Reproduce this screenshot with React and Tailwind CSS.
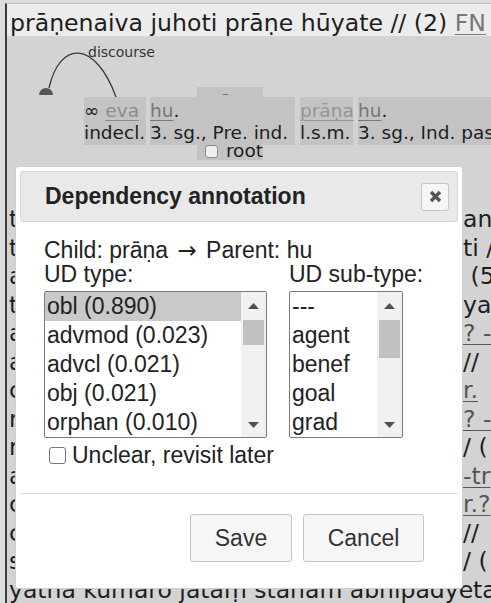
import React from "react";

const skt = "font-['DejaVu_Sans',sans-serif]";
const ui = "font-['Liberation_Sans',Arial,sans-serif]";
const link = "underline decoration-1 underline-offset-[3px]";

// Lines of the reading text that run behind the dialog
const textLines = [
  ["t", "an", false],
  ["t", "ti /", false],
  ["a", " (5", false],
  ["t", "yat", false],
  ["a", "? -", true],
  ["a", "//", false],
  ["c", "r.", true],
  ["r", "? -", true],
  ["r", "/ (", false],
  ["a", "-tr", true],
  ["c", "r.?", true],
  ["c", "//", false],
  ["s", "/ (", false],
];

function UpArrow() {
  return (
    <svg width="11" height="6" viewBox="0 0 11 6">
      <polygon points="0,6 5.5,0 11,6" fill="#505050" />
    </svg>
  );
}

function DownArrow() {
  return (
    <svg width="11" height="6" viewBox="0 0 11 6">
      <polygon points="0,0 11,0 5.5,6" fill="#505050" />
    </svg>
  );
}

function ListBox({ items, thumb, selectedFirst }) {
  return (
    <div className="mt-[5px] h-[147px] w-full border border-[#7a7a7a] rounded-[2px] flex bg-white overflow-hidden">
      <div className="flex-1 flex flex-col">
        {items.map((it, i) => (
          <div
            key={it}
            className={`h-[29px] leading-[29px] pl-[2px] whitespace-nowrap ${i === 0 && selectedFirst ? "bg-[#c9c9c9]" : ""}`}
          >
            {it}
          </div>
        ))}
      </div>
      <div className="w-[25px] bg-[#f1f1f1] flex flex-col">
        <div className="h-[28px] flex items-center justify-center">
          <UpArrow />
        </div>
        <div className={`mx-[2px] bg-[#c1c1c1] ${thumb}`} />
        <div className="flex-1" />
        <div className="h-[25px] flex items-center justify-center">
          <DownArrow />
        </div>
      </div>
    </div>
  );
}

export default function App() {
  return (
    <div className="w-[491px] h-[603px] overflow-hidden relative bg-[#dcdcdc]">
      {/* page column */}
      <div className={`ml-[5px] mt-[3px] h-[600px] border-l-2 border-t border-[#3a3a3a] border-t-[#c2c2c2] bg-[#d3d3d3] flex flex-col text-[#1e1e1e] ${skt}`}>
        {/* verse line */}
        <div className="h-[32px] shrink-0 overflow-hidden bg-[#ececec] pl-[3px] pt-[4px] text-[23.6px] leading-[30px] whitespace-nowrap">
          prāṇenaiva juhoti prāṇe hūyate // (2){" "}
          <span className={`${link} text-[#777]`}>FN</span>
        </div>

        {/* dependency tree canvas */}
        <div className="relative h-[169px] shrink-0">
          <svg className="absolute left-0 top-0" width="140" height="70" viewBox="0 0 140 70">
            <path d="M42 52 C53 4 88 4 109 61" fill="none" stroke="#3a3a3a" strokeWidth="1.3" />
            <path d="M32 59 A7 7 0 0 1 46 59 Z" fill="#555" />
          </svg>
          <span className="absolute left-[81px] top-[9px] text-[14px] leading-[14px] text-[#333]">discourse</span>

          {/* root node */}
          <div className="absolute left-[190px] top-[51px] w-[66px] h-[73px] bg-[#c3c3c3] flex flex-col justify-between">
            <span className="pl-[25px] text-[13px] leading-[13px] text-[#666]">–</span>
            <div className="flex items-center text-[18.5px] leading-[18px]">
              <span className="ml-[8px] mr-[8px] w-[13px] h-[13px] border border-[#8c8c8c] rounded-[3px] bg-[#efefef]" />
              root
            </div>
          </div>

          {/* tokens */}
          <div className="relative z-10 ml-[77px] mt-[61px] flex text-[18.5px] leading-[22px] whitespace-nowrap">
            <div className="w-[62px] shrink-0 bg-[#c3c3c3] pt-[3px] pb-[1px]">
              <div>∞ <span className={`${link} text-[#8c8c8c]`}>eva</span></div>
              <div>indecl.</div>
            </div>
            <div className="w-[145px] shrink-0 ml-[4px] bg-[#c3c3c3] pt-[3px] pb-[1px]">
              <div><span className={`${link} text-[#777]`}>hu</span>.</div>
              <div>3. sg., Pre. ind.</div>
            </div>
            <div className="w-[53px] shrink-0 ml-[5px] bg-[#c3c3c3] pt-[3px] pb-[1px]">
              <div><span className={`${link} text-[#959595]`}>prāṇa</span></div>
              <div>l.s.m.</div>
            </div>
            <div className="w-[160px] shrink-0 ml-[5px] bg-[#c3c3c3] pt-[3px] pb-[1px]">
              <div><span className={`${link} text-[#777]`}>hu</span>.</div>
              <div>3. sg., Ind. pass.</div>
            </div>
          </div>
        </div>

        {/* reading text */}
        <div className="text-[23.5px] leading-[28.5px]">
          {textLines.map(([l, r, isLink], i) => (
            <div key={i} className="flex justify-between">
              <span className="pl-[2px]">{l}</span>
              <span className={`w-[28px] overflow-hidden whitespace-pre ${isLink ? "text-[#555]" : ""}`}>
                {isLink ? <span className={link}>{r}</span> : r}
              </span>
            </div>
          ))}
          <div className="pl-[2px] whitespace-nowrap">yathā kumāro jātaṃ stanam abhipadyeta</div>
        </div>
      </div>

      {/* annotation dialog */}
      <div className={`absolute left-[15px] top-[166px] w-[448px] h-[423px] bg-white border border-[#cfcfcf] rounded-[3px] p-[4px] flex flex-col text-[#222] ${ui}`}>
        <div className="h-[51px] shrink-0 bg-[#e9e9e9] border border-[#d6d6d6] rounded-[3px] flex items-center justify-between pl-[24px] pr-[8px]">
          <span className="text-[23px] font-bold">Dependency annotation</span>
          <div className="w-[28px] h-[28px] border border-[#c5c5c5] bg-[#f6f6f6] rounded-[3px] flex items-center justify-center">
            <svg width="13" height="13" viewBox="0 0 13 13">
              <path d="M2 2 L11 11 M11 2 L2 11" stroke="#555" strokeWidth="3.4" />
            </svg>
          </div>
        </div>

        <div className="flex-1 px-[24px] pt-[16px] text-[23px] leading-[24px]">
          <div className="whitespace-nowrap">
            Child: prāṇa <span className="mx-[3px] font-['DejaVu_Sans',sans-serif] text-[23px]">→</span> Parent: hu
          </div>
          <div className="flex gap-[22px]">
            <div className="w-[223px]">
              <div>UD type:</div>
              <ListBox
                items={["obl (0.890)", "advmod (0.023)", "advcl (0.021)", "obj (0.021)", "orphan (0.010)"]}
                thumb="h-[25px]"
                selectedFirst
              />
            </div>
            <div className="w-[114px]">
              <div className="whitespace-nowrap">UD sub-type:</div>
              <ListBox items={["---", "agent", "benef", "goal", "grad"]} thumb="h-[38px]" />
            </div>
          </div>
          <div className="flex items-center mt-[5px]">
            <span className="ml-[5px] mr-[6px] w-[17px] h-[17px] border border-[#767676] rounded-[3px] bg-white" />
            Unclear, revisit later
          </div>
        </div>

        <div className="shrink-0 border-t border-[#dddddd] flex justify-end gap-[11px] pt-[20px] pb-[22px] pr-[34px]">
          <div className="w-[102px] h-[48px] border border-[#c5c5c5] bg-[#f6f6f6] rounded-[3px] flex items-center justify-center text-[23px] text-[#333]">
            Save
          </div>
          <div className="w-[121px] h-[48px] border border-[#c5c5c5] bg-[#f6f6f6] rounded-[3px] flex items-center justify-center text-[23px] text-[#333]">
            Cancel
          </div>
        </div>
      </div>
    </div>
  );
}
